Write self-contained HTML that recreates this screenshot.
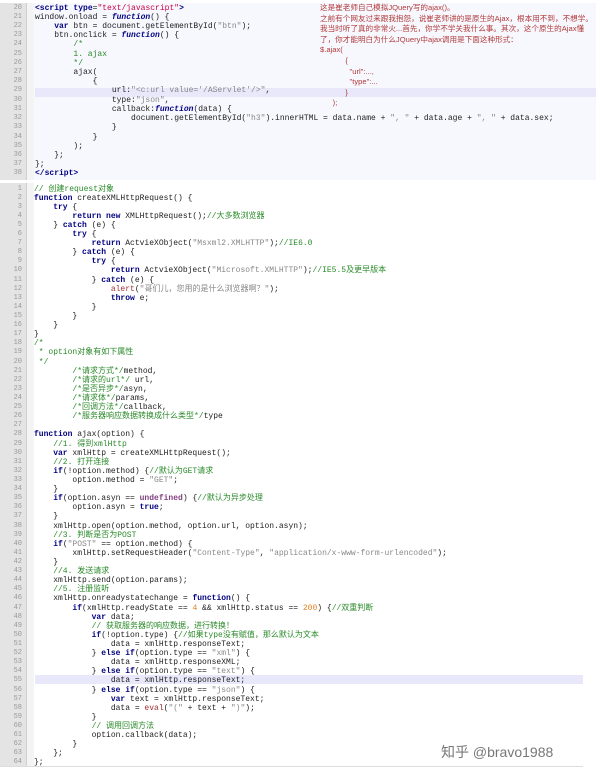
<!DOCTYPE html>
<html><head><meta charset="utf-8"><style>
*{margin:0;padding:0}
body{width:600px;height:777px;background:#fff;position:relative;overflow:hidden;font-family:"Liberation Mono","Noto Sans CJK SC",monospace;font-size:8px;color:#222}
.blk{position:absolute;left:0}
.g{position:absolute;left:0;top:0;bottom:0;width:26px;background:#e4e4e4;border-right:1px solid #d0d0d0}
.fold{position:absolute;left:27px;top:0;bottom:0;width:7px;background:#f4f4f4}
.ln{position:absolute;left:0;width:22px;text-align:right;color:#999;font-size:7px;line-height:9px}
.l{position:absolute;left:35px;white-space:pre;line-height:9px;height:9px}
.k{font-weight:bold;color:#000080}
.f{font-weight:bold;font-style:italic;color:#000080}
.s{color:#888}
.c{color:#2a8a2a}
.n{color:#e08020}
.hl{position:absolute;left:35px;right:0;height:9px;background:#e8e8fa}
.note{position:absolute;left:320px;top:3px;width:280px;font-family:"Liberation Sans","Noto Sans CJK SC",sans-serif;font-size:7.6px;line-height:10.6px;color:#b03a3a;white-space:pre}
.wm{position:absolute;left:441px;top:742px;font-family:"Liberation Sans","Noto Sans CJK SC",sans-serif;font-size:14px;color:#777}
</style></head><body>

<div class="blk" style="top:3px;width:596px;height:177px;background:#f7f8fe">
<div class="g"></div><div class="fold"></div>
<div class="hl" style="top:85px"></div>
</div>
<div class="blk" style="top:183px;width:583px;height:583px;background:#fff;border-bottom:1px solid #ddd">
<div class="g"></div><div class="fold"></div>
<div class="hl" style="top:492px"></div>
</div>

<div id="a"></div>
<div class="note">这是崔老师自己模拟JQuery写的ajax()。
之前有个网友过来跟我抱怨，说崔老师讲的是原生的Ajax，根本用不到，不想学。
我当时听了真的非常火...首先，你学不学关我什么事。其次，这个原生的Ajax懂
了，你才能明白为什么JQuery中ajax调用是下面这种形式：
$.ajax(
            {
              "url":...,
              "type":...
            }
      );</div>
<div class="wm">知乎 @bravo1988</div>

<script>
var b1=[
'<span class="k">&lt;script</span> <span class="k">type</span>=<span style="color:#c04">"text/javascript"</span><span class="k">&gt;</span>',
'window.onload = <span class="f">function</span>() {',
'    <span class="k">var</span> btn = document.getElementById(<span class="s">"btn"</span>);',
'    btn.onclick = <span class="f">function</span>() {',
'        <span class="c">/*</span>',
'        <span class="c">1. ajax</span>',
'        <span class="c">*/</span>',
'        ajax(',
'            {',
'                url:<span class="s">"&lt;c:url value=\'/AServlet\'/&gt;"</span>,',
'                type:<span class="s">"json"</span>,',
'                callback:<span class="f">function</span>(data) {',
'                    document.getElementById(<span class="s">"h3"</span>).innerHTML = data.name + <span class="s">", "</span> + data.age + <span class="s">", "</span> + data.sex;',
'                }',
'            }',
'        );',
'    };',
'};',
'<span class="k">&lt;/script&gt;</span>'];
var b2=[
'<span class="c">// 创建request对象</span>',
'<span class="k">function</span> createXMLHttpRequest() {',
'    <span class="k">try</span> {',
'        <span class="k">return new</span> XMLHttpRequest();<span class="c">//大多数浏览器</span>',
'    } <span class="k">catch</span> (e) {',
'        <span class="k">try</span> {',
'            <span class="k">return</span> ActvieXObject(<span class="s">"Msxml2.XMLHTTP"</span>);<span class="c">//IE6.0</span>',
'        } <span class="k">catch</span> (e) {',
'            <span class="k">try</span> {',
'                <span class="k">return</span> ActvieXObject(<span class="s">"Microsoft.XMLHTTP"</span>);<span class="c">//IE5.5及更早版本</span>',
'            } <span class="k">catch</span> (e) {',
'                <span style="color:#a03030">alert</span>(<span class="s">"哥们儿，您用的是什么浏览器啊？"</span>);',
'                <span class="k">throw</span> e;',
'            }',
'        }',
'    }',
'}',
'<span class="c">/*</span>',
'<span class="c"> * option对象有如下属性</span>',
'<span class="c"> */</span>',
'        <span class="c">/*请求方式*/</span>method,',
'        <span class="c">/*请求的url*/</span> url,',
'        <span class="c">/*是否异步*/</span>asyn,',
'        <span class="c">/*请求体*/</span>params,',
'        <span class="c">/*回调方法*/</span>callback,',
'        <span class="c">/*服务器响应数据转换成什么类型*/</span>type',
'',
'<span class="k">function</span> ajax(option) {',
'    <span class="c">//1. 得到xmlHttp</span>',
'    <span class="k">var</span> xmlHttp = createXMLHttpRequest();',
'    <span class="c">//2. 打开连接</span>',
'    <span class="k">if</span>(!option.method) {<span class="c">//默认为GET请求</span>',
'        option.method = <span class="s">"GET"</span>;',
'    }',
'    <span class="k">if</span>(option.asyn == <span style="color:#804080;font-weight:bold">undefined</span>) {<span class="c">//默认为异步处理</span>',
'        option.asyn = <span class="k">true</span>;',
'    }',
'    xmlHttp.open(option.method, option.url, option.asyn);',
'    <span class="c">//3. 判断是否为POST</span>',
'    <span class="k">if</span>(<span class="s">"POST"</span> == option.method) {',
'        xmlHttp.setRequestHeader(<span class="s">"Content-Type"</span>, <span class="s">"application/x-www-form-urlencoded"</span>);',
'    }',
'    <span class="c">//4. 发送请求</span>',
'    xmlHttp.send(option.params);',
'    <span class="c">//5. 注册监听</span>',
'    xmlHttp.onreadystatechange = <span class="k">function</span>() {',
'        <span class="k">if</span>(xmlHttp.readyState == <span class="n">4</span> &amp;&amp; xmlHttp.status == <span class="n">200</span>) {<span class="c">//双重判断</span>',
'            <span class="k">var</span> data;',
'            <span class="c">// 获取服务器的响应数据，进行转换！</span>',
'            <span class="k">if</span>(!option.type) {<span class="c">//如果type没有赋值，那么默认为文本</span>',
'                data = xmlHttp.responseText;',
'            } <span class="k">else if</span>(option.type == <span class="s">"xml"</span>) {',
'                data = xmlHttp.responseXML;',
'            } <span class="k">else if</span>(option.type == <span class="s">"text"</span>) {',
'                data = xmlHttp.responseText;',
'            } <span class="k">else if</span>(option.type == <span class="s">"json"</span>) {',
'                <span class="k">var</span> text = xmlHttp.responseText;',
'                data = <span style="color:#a03030">eval</span>(<span class="s">"("</span> + text + <span class="s">")"</span>);',
'            }',
'            <span class="c">// 调用回调方法</span>',
'            option.callback(data);',
'        }',
'    };',
'};'];
var h='';
b1.forEach(function(t,i){var y=3.5+i*9.22;h+='<div class="ln" style="top:'+y+'px">'+(20+i)+'</div><div class="l" style="top:'+y+'px">'+t+'</div>';});
b2.forEach(function(t,i){var y=184.5+i*9.11;h+='<div class="ln" style="top:'+y+'px">'+(1+i)+'</div><div class="l" style="top:'+y+'px;left:34px">'+t+'</div>';});
document.getElementById('a').innerHTML=h;
</script>
</body></html>
